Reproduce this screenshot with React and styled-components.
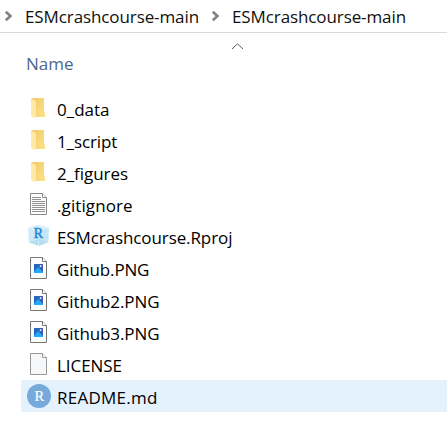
import React from "react";
import styled, { createGlobalStyle } from "styled-components";

const GlobalStyle = createGlobalStyle`
  body { margin: 0; background: #fff; overflow: hidden; }
  * { box-sizing: border-box; }
`;

const Explorer = styled.main`
  width: 447px;
  height: 432px;
  background: #fff;
  color: #101010;
  font: 17px/24px "Open Sans", "Noto Sans", sans-serif;
`;

const Breadcrumbs = styled.nav`
  display: flex;
  align-items: center;
  height: 33px;
  padding-left: 4px;
  border-bottom: 1px solid #d9d9d9;
`;

const Crumb = styled.div`
  display: flex;
  align-items: center;
  flex: none;
  width: 207px;
  gap: 11px;
`;

const Chevron = styled.svg`
  flex: none;
  width: 10px;
  height: 12px;
`;

const Label = styled.span`
  white-space: pre;
  letter-spacing: ${(p) => p.$spacing || 0}px;
`;

const CrumbLabel = styled(Label)`
  padding-top: 1px;
`;

const ColumnHeader = styled.header`
  display: grid;
  grid-template-columns: 204px 14px;
  height: 59px;
  padding: 10px 0 0 26px;
  color: #4c678f;
`;

const ColumnName = styled.div`
  padding-top: 9px;
`;

const SortArrow = styled.svg`
  width: 14px;
  height: 8px;
  margin-left: 1px;
`;

const FileList = styled.ul`
  list-style: none;
  margin: 0;
  padding: 0 0 0 21px;
`;

const FileRow = styled.li`
  display: flex;
  align-items: center;
  gap: 6px;
  height: 32px;
  padding-left: 6px;
  background: ${(p) => (p.$selected ? "#e4f2fd" : "transparent")};
  color: #000;
`;

const FileName = styled(Label)`
  padding-top: 3px;
`;

const Icon = styled.svg`
  flex: none;
  width: 24px;
  height: 24px;
`;

const CrumbChevron = () => (
  <Chevron viewBox="0 0 10 12">
    <path d="M1.8 1.8 6.4 6 1.8 10.2" fill="none" stroke="#808080" strokeWidth="2.6" />
  </Chevron>
);

const Folder = () => (
  <Icon viewBox="0 0 24 24">
    <defs>
      <linearGradient id="folder" x1="0" y1="0" x2="1" y2="1">
        <stop offset="0" stopColor="#efcb68" />
        <stop offset="1" stopColor="#ffe188" />
      </linearGradient>
    </defs>
    <path d="M4 2H17V15.5L18 16.5V21H8Z" fill="url(#folder)" />
    <path d="M4 2 9 5.2V22.7L4 20Z" fill="#ffe9a6" />
  </Icon>
);

const Page = ({ edge = "#777", fill = "#fcfcfc", children }) => (
  <Icon viewBox="0 0 24 24">
    <path d="M3.5 1.5H15.5L19.5 5.5V22.5H3.5Z" fill={fill} stroke={edge} />
    <path d="M15.5 1.5V5.5H19.5" fill="#fff" stroke={edge} />
    {children}
  </Icon>
);

const TextPage = () => (
  <Page edge="#898989">
    <path
      d="M5 5.5H14M5 7.5H14M5 9.5H18M5 11.5H18M5 13.5H18M5 15.5H18M5 17.5H18M5 19.5H18"
      stroke="#929292"
    />
  </Page>
);

const ImagePage = () => (
  <Page>
    <defs>
      <linearGradient id="photo" x1="0" y1="0" x2="1" y2="0">
        <stop offset="0" stopColor="#1769bd" />
        <stop offset="1" stopColor="#4559b8" />
      </linearGradient>
    </defs>
    <rect x="7" y="8" width="9" height="9" rx="0.6" fill="url(#photo)" />
    <path d="M7 15.5 11 11 16 16V17H7Z" fill="#22a8f4" />
    <circle cx="13.6" cy="10.2" r="0.9" fill="#fff" />
  </Page>
);

const BlankPage = () => <Page edge="#999" fill="#f6f7f8" />;

const ProjectCube = () => (
  <Icon viewBox="0 0 24 24">
    <path d="M1.2 3.8 11.5 1 21.8 3.8 21.3 18 11.5 22 1.7 18Z" fill="#cfebf8" />
    <path d="M1.2 3.8 11.5 1 21.8 3.8 11.5 6.3Z" fill="#d5eef9" />
    <path d="M1.7 18 11.5 15.5 21.3 18 11.5 22Z" fill="#b4dcef" />
    <path d="M11.5 6.3 21.8 3.8 21.3 18 11.5 22Z" fill="#b9dff1" fillOpacity="0.5" />
    <path d="M1.2 3.8 11.5 6.3 21.8 3.8M11.5 17V22" fill="none" stroke="#eefaff" strokeWidth="0.6" />
    <text x="11.4" y="14.3" textAnchor="middle" fontFamily="Liberation Serif, serif" fontSize="14" fill="#2488d2" stroke="#2488d2" strokeWidth="0.5">R</text>
  </Icon>
);

const MarkdownBadge = () => (
  <Icon viewBox="0 0 24 24">
    <circle cx="12" cy="12" r="12" fill="#75aadb" />
    <text x="12.3" y="16.7" textAnchor="middle" fontFamily="Liberation Serif, serif" fontSize="14.5" fill="#fff" stroke="#fff" strokeWidth="0.2">R</text>
  </Icon>
);

const files = [
  { name: "0_data", Glyph: Folder, spacing: 0 },
  { name: "1_script", Glyph: Folder, spacing: -0.1 },
  { name: "2_figures", Glyph: Folder, spacing: -0.05 },
  { name: ".gitignore", Glyph: TextPage, spacing: 0.1 },
  { name: "ESMcrashcourse.Rproj", Glyph: ProjectCube, spacing: -0.1 },
  { name: "Github.PNG", Glyph: ImagePage, spacing: -0.15 },
  { name: "Github2.PNG", Glyph: ImagePage, spacing: -0.1 },
  { name: "Github3.PNG", Glyph: ImagePage, spacing: -0.1 },
  { name: "LICENSE", Glyph: BlankPage, spacing: -0.05 },
  { name: "README.md", Glyph: MarkdownBadge, spacing: 0.25, selected: true },
];

const path = ["ESMcrashcourse-main", "ESMcrashcourse-main"];

export default function App() {
  return (
    <Explorer>
      <GlobalStyle />
      <Breadcrumbs>
        {path.map((name, i) => (
          <Crumb key={i}>
            <CrumbChevron />
            <CrumbLabel $spacing={-0.1}>{name}</CrumbLabel>
          </Crumb>
        ))}
      </Breadcrumbs>
      <ColumnHeader>
        <ColumnName><Label>Name</Label></ColumnName>
        <SortArrow viewBox="0 0 14 8">
          <path d="M1 6 6.5 .8 12 6" fill="none" stroke="#606060" />
        </SortArrow>
      </ColumnHeader>
      <FileList>
        {files.map(({ name, Glyph, spacing, selected }) => (
          <FileRow key={name} $selected={selected}>
            <Glyph />
            <FileName $spacing={spacing}>{name}</FileName>
          </FileRow>
        ))}
      </FileList>
    </Explorer>
  );
}
